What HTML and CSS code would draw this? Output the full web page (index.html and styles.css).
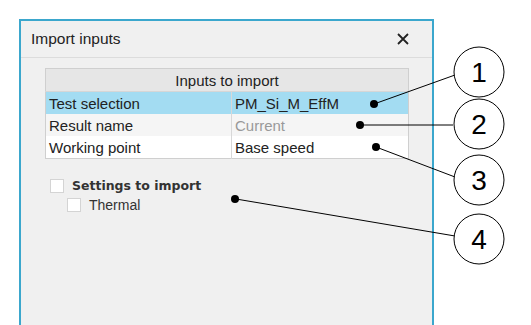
FILE: index.html
```html
<!DOCTYPE html>
<html lang="en">
<head>
    <meta charset="UTF-8">
    <title>Import inputs</title>
    <link rel="stylesheet" href="styles.css">
</head>
<body>

    <div class="dialog">
        <div class="title-bar">
            <span class="title">Import inputs</span>
            <svg class="close" width="12" height="12" viewBox="0 0 12 12">
                <path d="M1 1 L11 11 M11 1 L1 11" stroke="#222" stroke-width="1.8" fill="none"/>
            </svg>
        </div>
        <div class="content">
            <table class="inputs">
                <tr class="head"><th colspan="2">Inputs to import</th></tr>
                <tr class="selected"><td>Test selection</td><td>PM_Si_M_EffM</td></tr>
                <tr class="alt"><td>Result name</td><td class="muted">Current</td></tr>
                <tr><td>Working point</td><td>Base speed</td></tr>
            </table>

            <div class="settings">
                <label class="check bold"><span class="box"></span>Settings to import</label>
                <label class="check sub"><span class="box"></span>Thermal</label>
            </div>
        </div>
    </div>

    <!-- callouts -->
    <svg class="callouts" width="531" height="325" viewBox="0 0 531 325">
        <g stroke="#000" stroke-width="1" fill="none">
            <line x1="374" y1="104" x2="455" y2="75"/>
            <line x1="360" y1="125" x2="453" y2="125"/>
            <line x1="376" y1="147" x2="455" y2="177"/>
            <line x1="236" y1="199" x2="455" y2="236"/>
            <circle cx="479" cy="72" r="25" fill="#fff"/>
            <circle cx="479" cy="124" r="25" fill="#fff"/>
            <circle cx="479" cy="180" r="25" fill="#fff"/>
            <circle cx="479" cy="239" r="25" fill="#fff"/>
        </g>
        <g fill="#000">
            <circle cx="374" cy="104" r="4"/>
            <circle cx="360" cy="125" r="4"/>
            <circle cx="376" cy="147" r="4"/>
            <circle cx="235" cy="199" r="4"/>
        </g>
        <g class="num" text-anchor="middle">
            <text x="479" y="82">1</text>
            <text x="479" y="134">2</text>
            <text x="479" y="190">3</text>
            <text x="479" y="249">4</text>
        </g>
    </svg>

</body>
</html>
```

FILE: styles.css
```css
body {
    margin: 0;
    width: 531px;
    height: 325px;
    overflow: hidden;
    background-color: #fff;
    font-family: 'Liberation Sans', Arial, sans-serif;
    position: relative;
}

.dialog {
    margin: 19px 0 0 19px;
    width: 411px;
    height: 304px;
    border: 2px solid #3ba7cd;
    border-bottom: 0;
    background-color: #f0f0f0;
}

.title-bar {
    height: 36px;
    border-bottom: 1px solid #dcdcdc;
    display: flex;
    align-items: center;
    justify-content: space-between;
    padding: 0 23px 0 10px;
}

.title {
    font-size: 15.5px;
    color: #222;
}

.close {
    display: block;
}

.content {
    padding: 10px 0 0 24px;
}

.inputs {
    width: 364px;
    border-collapse: collapse;
    border: 1px solid #cfcfcf;
    font-size: 15px;
    color: #222;
}

.inputs th {
    height: 22px;
    padding: 0;
    font-weight: normal;
    background-color: #e6e6e6;
    border-bottom: 1px solid #d6d6d6;
}

.inputs td {
    height: 22px;
    padding: 0 0 0 3px;
    background-color: #fff;
}

.inputs td + td {
    width: 173px;
    border-left: 1px solid #d8d8d8;
}

.inputs tr.selected td {
    background-color: #a3dcf2;
}

.inputs tr.alt td {
    background-color: #f5f5f5;
}

.inputs td.muted {
    color: #999;
}

.settings {
    padding: 19px 0 0 5px;
    display: flex;
    flex-direction: column;
    gap: 4px;
}

.check {
    display: flex;
    align-items: center;
    gap: 8px;
    font-size: 13px;
    color: #333;
}

.check.bold {
    font-family: 'DejaVu Sans', Verdana, sans-serif;
    font-weight: bold;
    font-size: 12.5px;
}

.check.sub {
    padding-left: 17px;
    font-size: 14px;
}

.box {
    width: 12px;
    height: 12px;
    border: 1px solid #d4d4d4;
    background-color: #fff;
}

.callouts {
    position: absolute;
    left: 0;
    top: 0;
}

.num {
    font-family: 'Liberation Sans', Arial, sans-serif;
    font-size: 28px;
    fill: #000;
}
```
